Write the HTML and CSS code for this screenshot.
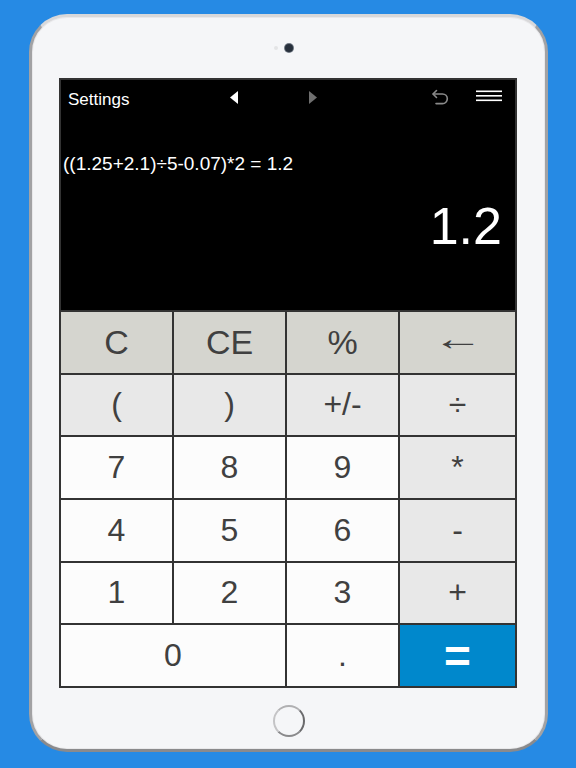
FILE: index.html
```html
<!DOCTYPE html>
<html>
<head>
<meta charset="utf-8">
<link rel="stylesheet" href="styles.css">
</head>
<body>
<div class="device">
  <div class="top-bezel">
    <span class="sensor"></span>
    <span class="camera"></span>
  </div>
  <div class="screen">
    <div class="display">
      <div class="header">
        <span class="settings">Settings</span>
        <svg class="arrow" width="8" height="13" viewBox="0 0 8 13"><path d="M8 0 L0 6.5 L8 13 Z" fill="#ffffff"/></svg>
        <svg class="arrow arrow-right" width="8" height="13" viewBox="0 0 8 13"><path d="M0 0 L8 6.5 L0 13 Z" fill="#6f6f6f"/></svg>
        <span class="spacer"></span>
        <svg class="undo" width="18" height="17" viewBox="0 0 18 17"><path d="M5.5 1.5 L2 5 L5.5 8.5" fill="none" stroke="#8a8a8a" stroke-width="1.6" stroke-linejoin="round" stroke-linecap="round"/><path d="M2.3 5 H11.5 A4.8 4.8 0 0 1 11.5 14.6 H5" fill="none" stroke="#8a8a8a" stroke-width="1.6" stroke-linecap="round"/></svg>
        <svg class="menu" width="26" height="12" viewBox="0 0 26 12"><rect x="0" y="0.5" width="26" height="1.6" fill="#fff"/><rect x="0" y="5" width="26" height="1.6" fill="#fff"/><rect x="0" y="9.5" width="26" height="1.6" fill="#fff"/></svg>
      </div>
      <div class="expression">((1.25+2.1)÷5-0.07)*2 = 1.2</div>
      <div class="result">1.2</div>
    </div>
    <div class="keys">
      <div class="key fn big">C</div>
      <div class="key fn big">CE</div>
      <div class="key fn big">%</div>
      <div class="key fn big"><span class="back">←</span></div>
      <div class="key op">(</div>
      <div class="key op">)</div>
      <div class="key op">+/-</div>
      <div class="key op">÷</div>
      <div class="key num">7</div>
      <div class="key num">8</div>
      <div class="key num">9</div>
      <div class="key op">*</div>
      <div class="key num">4</div>
      <div class="key num">5</div>
      <div class="key num">6</div>
      <div class="key op">-</div>
      <div class="key num">1</div>
      <div class="key num">2</div>
      <div class="key num">3</div>
      <div class="key op">+</div>
      <div class="key num zero">0</div>
      <div class="key num">.</div>
      <div class="key equals">=</div>
    </div>
  </div>
  <div class="bottom-bezel">
    <span class="home"></span>
  </div>
</div>
</body>
</html>
```

FILE: styles.css
```css
* { box-sizing: border-box; }
html, body { margin: 0; padding: 0; }
body {
  background: #268ae4;
  width: 576px;
  height: 768px;
  overflow: hidden;
  font-family: "Liberation Sans", Arial, sans-serif;
}
.device {
  margin: 14px 0 0 29px;
  width: 519px;
  height: 738px;
  border-radius: 38px;
  background: #f5f6f8;
  border: 3px solid #a2a2a4;
  border-top-color: #d8d8da;
  border-bottom-color: #8a8a8c;
  box-shadow: inset 0 0 0 1px #e9e9eb;
  display: flex;
  flex-direction: column;
}
.top-bezel {
  height: 61px;
  display: flex;
  align-items: center;
  justify-content: center;
  position: relative;
}
.camera {
  width: 8px;
  height: 8px;
  border-radius: 50%;
  background: #27303c;
  box-shadow: 0 0 0 1px #6d7580;
}
.sensor {
  position: absolute;
  left: 242px;
  top: 29px;
  width: 4px;
  height: 4px;
  border-radius: 50%;
  background: #e3e4e6;
}
.screen {
  margin-left: 27px;
  width: 458px;
  height: 610px;
  border: 2px solid #333333;
  background: #000;
  display: flex;
  flex-direction: column;
}
.display {
  height: 230px;
  color: #fff;
}
.header {
  height: 40px;
  display: flex;
  align-items: center;
}
.settings {
  width: 169px;
  padding-left: 7px;
  font-size: 17px;
}
.arrow { margin-top: -6px; }
.arrow-right { margin-left: 71px; }
.spacer { flex: 1; }
.undo { margin-top: -6px; }
.menu { margin-left: 27px; margin-right: 13px; margin-top: -8px; }
.expression {
  margin-top: 32px;
  padding-left: 2px;
  font-size: 19px;
  line-height: 24px;
  height: 24px;
}
.result {
  margin-top: 20px;
  text-align: right;
  padding-right: 13px;
  font-size: 52px;
  line-height: 60px;
}
.keys {
  flex: 1;
  background: #333333;
  padding-top: 2px;
  display: grid;
  grid-template-columns: 111px 111px 111px 1fr;
  grid-template-rows: repeat(6, 1fr);
  gap: 2px;
}
.key {
  display: flex;
  align-items: center;
  justify-content: center;
  color: #404040;
  font-size: 32px;
}
.fn { background: #d5d5cf; }
.big { font-size: 34px; }
.back { display: inline-block; transform: translateY(-4px) scaleX(1.5); }
.op { background: #e8e8e8; }
.num { background: #fcfcfc; }
.zero { grid-column: span 2; }
.equals {
  background: #0088cc;
  color: #fff;
  font-size: 46px;
  font-weight: bold;
}
.bottom-bezel {
  flex: 1;
  display: flex;
  align-items: center;
  justify-content: center;
  padding-top: 5px;
}
.home {
  width: 32px;
  height: 32px;
  border-radius: 50%;
  border: 2px solid #8a8a8c;
  border-left-color: #c4c4c6;
  border-top-color: #b0b0b2;
  border-right-color: #6a6a6c;
}
```
